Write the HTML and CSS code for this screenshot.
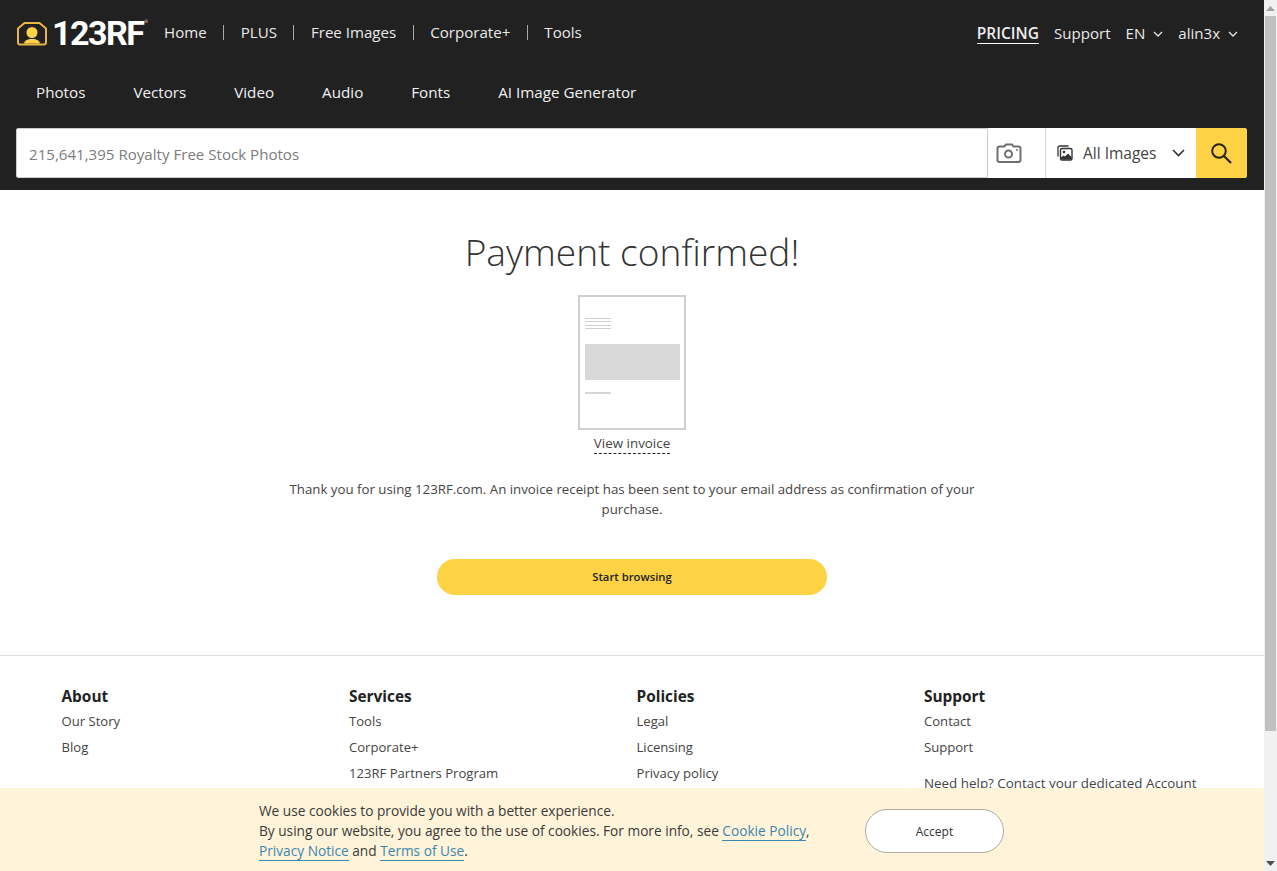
FILE: index.html
```html
<!DOCTYPE html>
<html lang="en">
<head>
<meta charset="utf-8">
<title>Payment confirmed</title>
<link rel="stylesheet" href="styles.css">
</head>
<body>
<div class="viewport">
  <div class="page">
    <header class="header">
      <div class="top-row">
        <a class="logo">
          <svg width="32" height="26" viewBox="0 0 32 26"><path d="M8.500 3H23.500L30 8.500V22.500Q30 24.500 28 24.500H4Q2 24.500 2 22.500V8.500Z" fill="none" stroke="#e9b544" stroke-width="2" stroke-linejoin="round"/><circle cx="16" cy="12.500" r="5.500" fill="#fdd244"/><path d="M8 23.500C8.500 20.500 11 19 16 19S23.500 20.500 24 23.500Z" fill="#fdd244"/></svg>
          <span class="logo-text">123RF</span><span class="logo-tm">®</span>
        </a>
        <nav class="main-nav">
          <a>Home</a><i></i><a>PLUS</a><i></i><a>Free Images</a><i></i><a>Corporate+</a><i></i><a>Tools</a>
        </nav>
        <nav class="user-nav">
          <a class="pricing">PRICING</a>
          <a>Support</a>
          <a class="drop">EN <svg width="10" height="6" viewBox="0 0 10 6"><path d="M1 1l4 4 4-4" fill="none" stroke="#e6e6e6" stroke-width="1.300"/></svg></a>
          <a class="drop">alin3x <svg width="10" height="6" viewBox="0 0 10 6"><path d="M1 1l4 4 4-4" fill="none" stroke="#e6e6e6" stroke-width="1.300"/></svg></a>
        </nav>
      </div>
      <nav class="cat-nav">
        <a>Photos</a><a>Vectors</a><a>Video</a><a>Audio</a><a>Fonts</a><a>AI Image Generator</a>
      </nav>
      <form class="search">
        <div class="search-input">215,641,395 Royalty Free Stock Photos</div>
        <div class="search-cam">
          <svg width="26" height="20" viewBox="0 0 26 20"><path d="M8.500 3.500L10 1.500H16L17.500 3.500H22.500Q24.500 3.500 24.500 5.500V17Q24.500 19 22.500 19H3.500Q1.500 19 1.500 17V5.500Q1.500 3.500 3.500 3.500Z" fill="none" stroke="#6f6f6f" stroke-width="2"/><circle cx="12.500" cy="11" r="3.500" fill="none" stroke="#6f6f6f" stroke-width="2"/><circle cx="21" cy="7" r="1" fill="#6f6f6f"/></svg>
        </div>
        <div class="search-type">
          <svg class="pic" width="16" height="16" viewBox="0 0 16 16"><path d="M1 11.500V3Q1 1 3 1H11.500" fill="none" stroke="#333" stroke-width="1.300"/><rect x="3.500" y="3.500" width="11.500" height="11.500" rx="1.500" fill="#fff" stroke="#333" stroke-width="1.400"/><circle cx="7" cy="7" r="1.300" fill="#333"/><path d="M4 14.500V12.500L6.500 10.500L8 11.500L11 8.500L14.500 12V14.500Z" fill="#333"/></svg>
          <span>All Images</span>
          <svg class="caret" width="13" height="8" viewBox="0 0 13 8"><path d="M1 1l5.500 5.500L12 1" fill="none" stroke="#333" stroke-width="1.600"/></svg>
        </div>
        <button class="search-btn" type="button">
          <svg width="22" height="22" viewBox="0 0 22 22"><circle cx="9" cy="9" r="6.800" fill="none" stroke="#2b2411" stroke-width="2"/><path d="M14 14l7 7" stroke="#2b2411" stroke-width="2.200"/></svg>
        </button>
      </form>
    </header>

    <main class="content">
      <h1>Payment confirmed!</h1>
      <div class="invoice">
        <div class="inv-lines"><b></b><b></b><b></b><b></b></div>
        <div class="inv-block"></div>
        <div class="inv-line"></div>
      </div>
      <a class="view-invoice">View invoice</a>
      <p class="thanks">Thank you for using 123RF.com. An invoice receipt has been sent to your email address as confirmation of your purchase.</p>
      <button class="start" type="button">Start browsing</button>
    </main>

    <footer class="footer">
      <div class="col">
        <h4>About</h4>
        <a>Our Story</a>
        <a>Blog</a>
      </div>
      <div class="col">
        <h4>Services</h4>
        <a>Tools</a>
        <a>Corporate+</a>
        <a>123RF Partners Program</a>
      </div>
      <div class="col">
        <h4>Policies</h4>
        <a>Legal</a>
        <a>Licensing</a>
        <a>Privacy policy</a>
      </div>
      <div class="col">
        <h4>Support</h4>
        <a>Contact</a>
        <a>Support</a>
        <p>Need help? Contact your dedicated Account Manager</p>
      </div>
    </footer>

    <div class="cookie">
      <p>We use cookies to provide you with a better experience.<br>By using our website, you agree to the use of cookies. For more info, see <a>Cookie Policy</a>,<br><a>Privacy Notice</a> and <a>Terms of Use</a>.</p>
      <button class="accept" type="button">Accept</button>
    </div>
  </div>
  <div class="scrollbar">
    <div class="sb-btn"><svg width="9" height="5" viewBox="0 0 9 5"><path d="M4.500 0L9 5H0Z" fill="#a3a3a3"/></svg></div>
    <div class="sb-thumb"></div>
    <div class="sb-track"></div>
    <div class="sb-btn"><svg width="9" height="5" viewBox="0 0 9 5"><path d="M0 0H9L4.500 5Z" fill="#505050"/></svg></div>
  </div>
</div>
</body>
</html>
```
FILE: styles.css
```css
* { box-sizing: border-box; }
html, body { margin: 0; height: 100%; overflow: hidden; }
body { font-family: "Open Sans", "Noto Sans", sans-serif; color: #333; background: #fff; }
a { color: inherit; text-decoration: none; }

.viewport { display: flex; height: 871px; }
.page { position: relative; width: 1264px; height: 871px; overflow: hidden; flex: none; }

.header { background: #212121; height: 190px; color: #e9e9e9; padding: 0 17px 0 16px; }
.top-row { display: flex; align-items: center; height: 66px; }
.logo { display: flex; align-items: center; width: 148px; position: relative; }
.logo svg { flex: none; margin-right: 4px; }
.logo-text { font-family: Roboto, sans-serif; font-weight: 700; font-size: 34px; letter-spacing: -1.500px; color: #fff; line-height: 1; }
.logo-tm { font-size: 4px; align-self: flex-start; color: #fff; margin: 3px 0 0 1px; }
.main-nav { display: flex; align-items: center; font-size: 15.100px; padding-bottom: 2px; }
.main-nav i { width: 1px; height: 15px; background: #a8a8a8; margin: 0 16.500px; }
.user-nav { display: flex; align-items: center; margin-left: auto; font-size: 15.100px; padding-right: 9px; gap: 15px; }
.pricing { font-size: 15.500px; font-weight: 600; border-bottom: 1px solid #fff; line-height: 20px; color: #eee; }
.drop svg { margin-left: 4px; vertical-align: 2px; }

.cat-nav { display: flex; height: 52px; align-items: center; padding: 0 0 0 20px; gap: 48px; font-size: 15.200px; color: #f0f0f0; }

.search { display: flex; height: 50px; margin-top: 10px; background: #fff; border-radius: 3px; overflow: hidden; }
.search-input { flex: 1; border: 1px solid #ccc; border-radius: 3px 0 0 3px; padding-left: 12px; font-size: 15.100px; line-height: 50px; color: #7c7c7c; }
.search-cam { width: 58px; display: flex; align-items: center; padding-left: 8px; border-right: 1px solid #d6d6d6; }
.search-type { width: 150px; display: flex; align-items: center; padding-left: 11px; font-size: 15.500px; color: #444; }
.search-type span { margin-left: 10px; }
.search-type .caret { margin-left: 16px; }
.search-btn { width: 51px; border: 0; padding: 0 2px 0 0; background: #fdd244; display: flex; align-items: center; justify-content: center; }

.content { display: flex; flex-direction: column; align-items: center; height: 466px; border-bottom: 1px solid #dedede; }
.content h1 { margin: 37px 0 0; font-weight: 300; font-size: 37.100px; line-height: 50px; color: #333; }
.invoice { width: 108px; height: 135px; margin-top: 18px; border: 2px solid #cfcfcf; padding: 21px 4px 0 5px; }
.inv-lines { height: 14px; display: flex; flex-direction: column; gap: 2.400px; }
.inv-lines b { display: block; width: 26px; height: 1px; background: #cfcfcf; }
.inv-block { height: 36px; margin-top: 12px; background: #d8d8d8; }
.inv-line { width: 26px; height: 1.500px; margin-top: 12px; background: #d6d6d6; }
.view-invoice { margin-top: 3px; font-size: 13.400px; line-height: 20px; color: #444; border-bottom: 1px dashed #222; height: 21px; }
.thanks { width: 700px; margin: 25px 0 0; text-align: center; font-size: 13.270px; line-height: 20px; color: #444; }
.start { width: 390px; height: 36px; margin-top: 40px; padding: 0 0 1px; border: 0; border-radius: 18px; background: #fdd244; font: 600 11.300px "Open Sans", sans-serif; color: #222; }

.footer { display: flex; padding: 30px 0 0 61.500px; }
.col { width: 287.500px; font-size: 13.100px; color: #444; }
.col h4 { margin: 0; font-size: 15.400px; line-height: 22px; font-weight: 700; color: #222; }
.col a { display: block; line-height: 26px; }
.col p { margin: 13px 0 0; width: 290px; font-size: 13.400px; line-height: 20px; }

.cookie { position: absolute; left: 0; bottom: 0; width: 100%; height: 83px; background: #fff3d9; display: flex; padding: 13px 0 0 259px; font-size: 13.680px; font-weight: 500; color: #3a3a3a; }
.cookie p { margin: 0; width: 606px; line-height: 20px; }
.cookie p a { color: #3b87ad; border-bottom: 1px solid #3b87ad; }
.accept { width: 139px; height: 44px; margin-top: 8px; border: 1px solid #b0aca2; border-radius: 22px; background: #fff; font: 500 12px "Open Sans", sans-serif; color: #333; }

.scrollbar { width: 13px; flex: 1; height: 871px; background: #f1f1f1; display: flex; flex-direction: column; align-items: stretch; }
.sb-btn { height: 16px; display: flex; align-items: center; justify-content: center; }
.sb-thumb { height: 715px; background: #c1c1c1; margin: 0 1px; }
.sb-track { flex: 1; }
```
